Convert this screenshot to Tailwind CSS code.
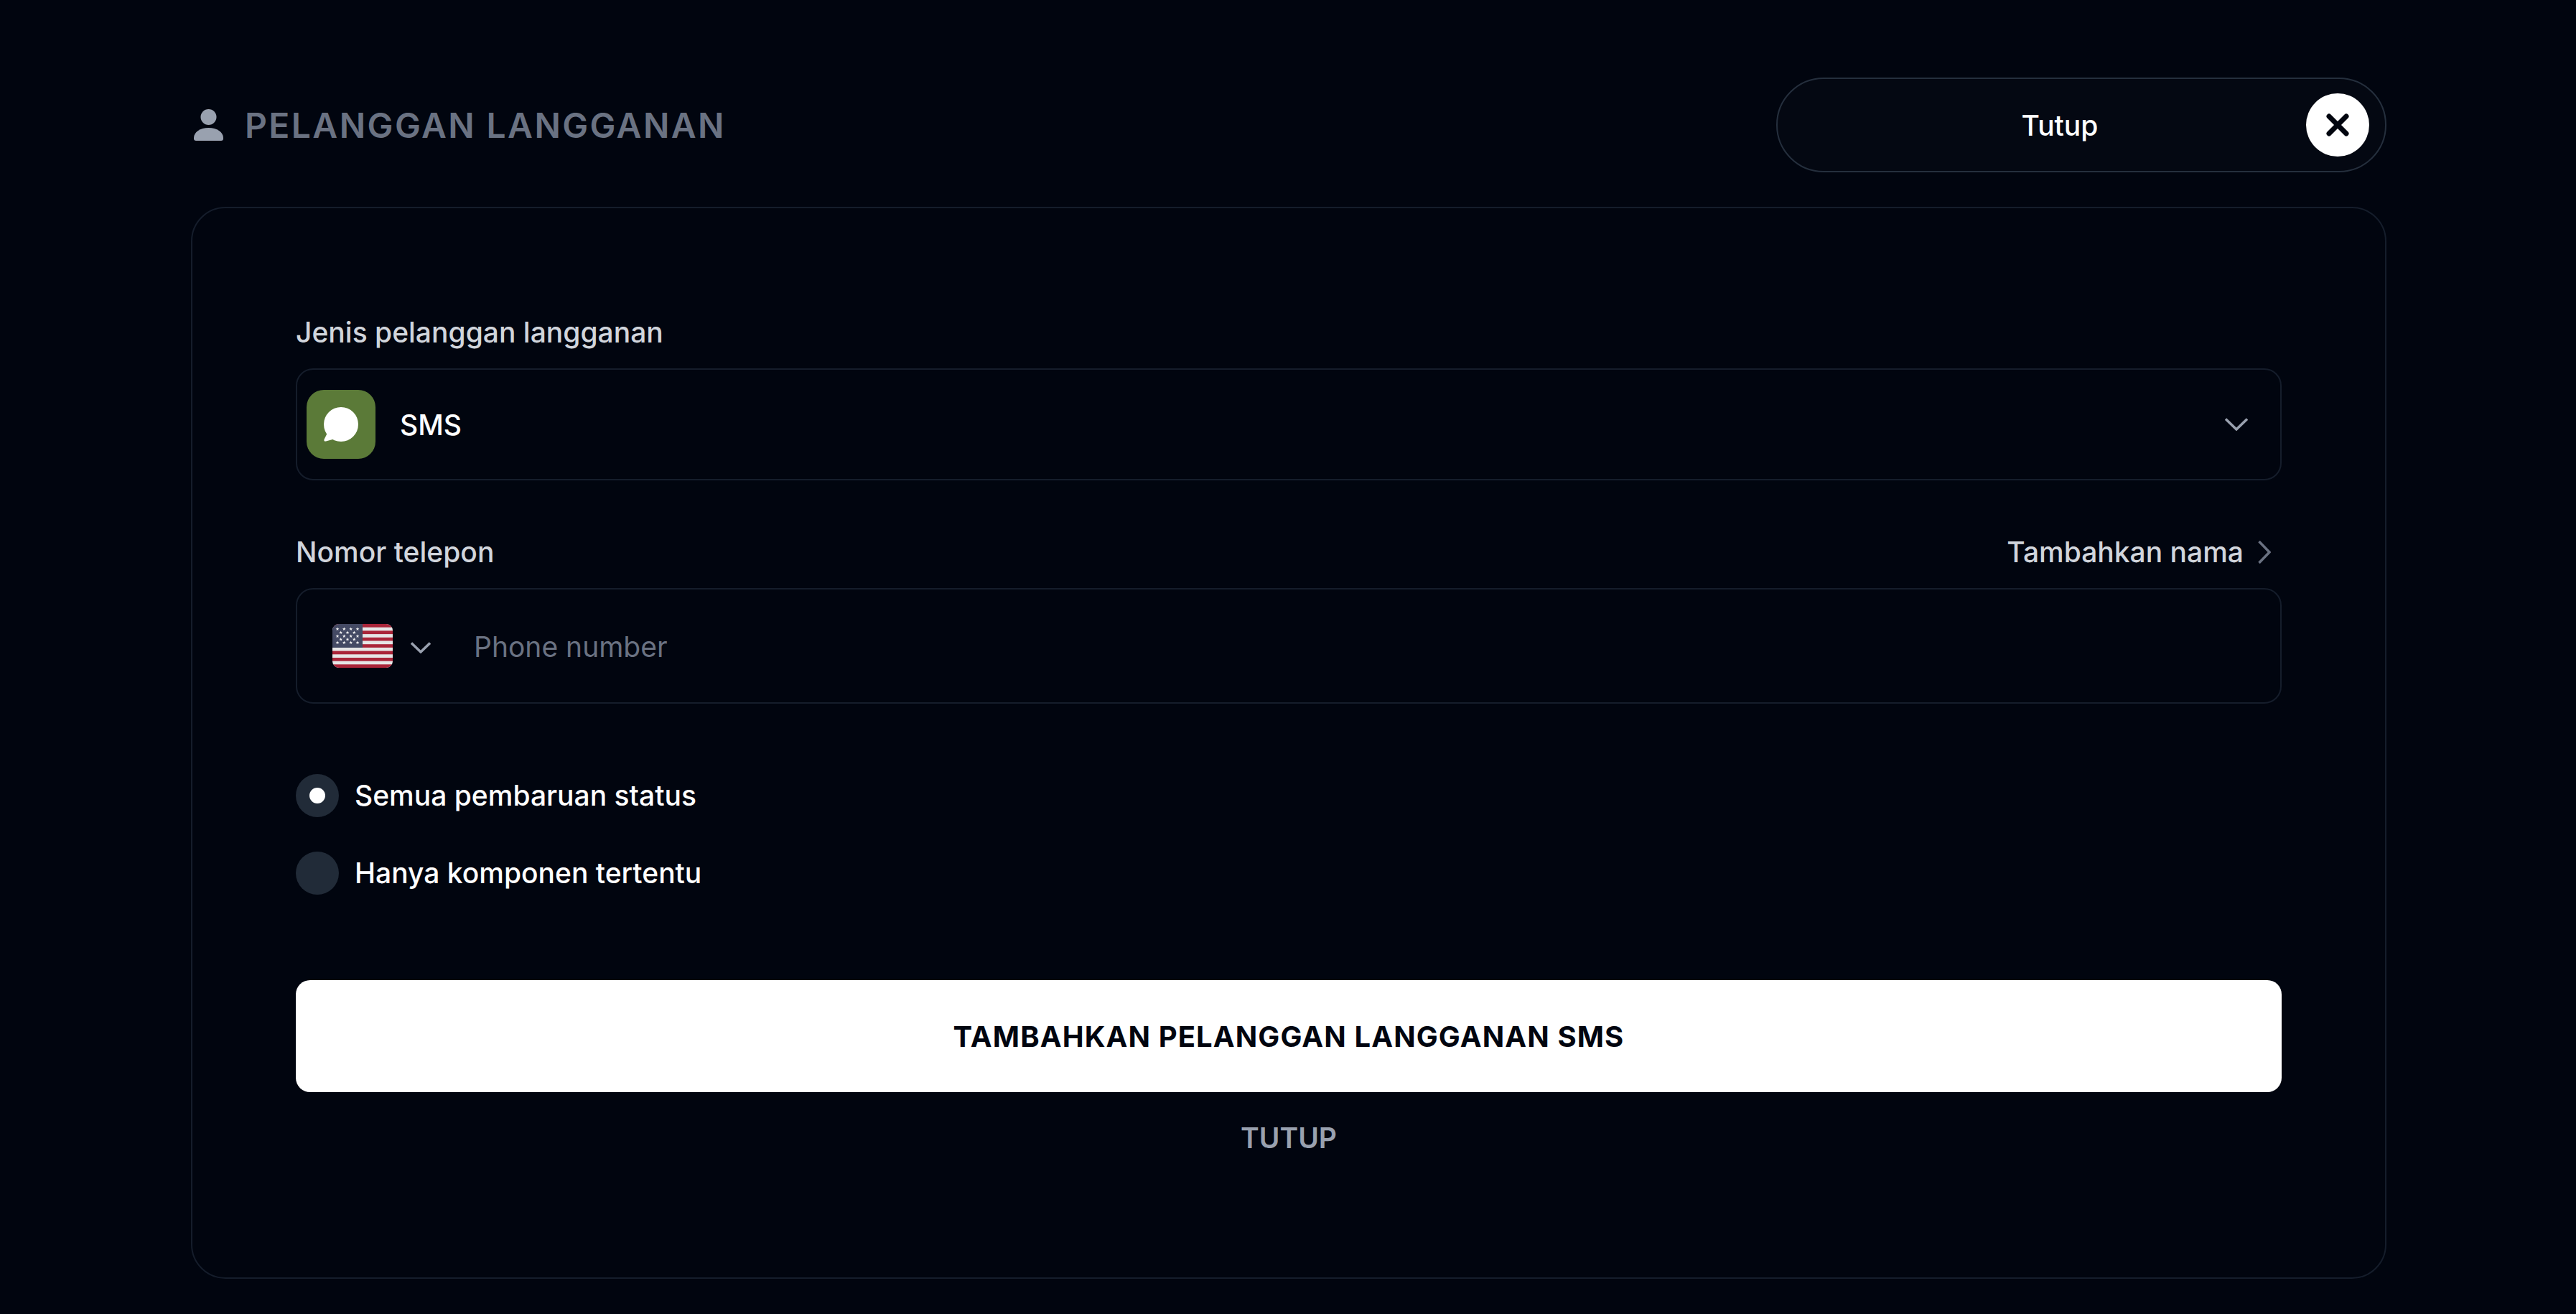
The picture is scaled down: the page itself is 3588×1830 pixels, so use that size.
<!DOCTYPE html>
<html lang="id">
<head>
    <meta charset="UTF-8">
    <meta name="viewport" content="width=device-width, initial-scale=1.0">
    <title>Pelanggan langganan</title>
    <script src="https://cdn.jsdelivr.net/npm/@tailwindcss/browser@4"></script>
</head>
<body class="bg-[#01050f] font-[Inter,sans-serif] w-[3588px] h-[1830px] overflow-hidden">
    <div class="pt-[108px] pl-[266px] pr-[264px]">

        <!-- Header -->
        <div class="flex items-center justify-between h-[132px] mb-[48px]">
            <div class="flex items-center gap-[30px] pl-[4px]">
                <svg class="w-[41px] h-[44px] text-gray-400" viewBox="0 0 41 44" fill="currentColor">
                    <ellipse cx="20.5" cy="11" rx="11" ry="11"/>
                    <path d="M0 40C0 32 9 26 20.5 26S41 32 41 40V41A3 3 0 0 1 38 44H3A3 3 0 0 1 0 41Z"/>
                </svg>
                <span class="pt-[2px] text-[48px] leading-[56px] font-semibold tracking-[2.4px] text-gray-500">PELANGGAN LANGGANAN</span>
            </div>
            <div class="flex items-center w-[850px] h-[132px] px-[22px] rounded-full border-2 border-[#252f3d] bg-white/[0.015]">
                <span class="flex-1 text-center pl-[28px] pt-[2px] text-[39px] leading-[52px] font-medium text-white">Tutup</span>
                <span class="flex items-center justify-center w-[88px] h-[88px] rounded-full bg-white">
                    <svg class="w-[40px] h-[40px]" viewBox="0 0 40 40" fill="none" stroke="#01050f" stroke-width="7" stroke-linecap="round">
                        <path d="M8 8L32 32M32 8L8 32"/>
                    </svg>
                </span>
            </div>
        </div>

        <!-- Card -->
        <div class="h-[1493px] pl-[144px] pr-[144px] pt-[145px] rounded-[48px] border-2 border-[#151d2b]">
            <label class="block text-[39px] leading-[56px] font-medium text-gray-300 mb-[22px]">Jenis pelanggan langganan</label>
            <div class="flex items-center h-[156px] pl-[13px] pr-[45px] rounded-[24px] border-2 border-[#151d2b]">
                <span class="flex items-center justify-center w-[96px] h-[96px] rounded-[24px] bg-[#5b7a38]">
                    <svg class="w-[96px] h-[96px]" viewBox="0 0 96 96" fill="#fff">
                        <circle cx="48" cy="48" r="24"/>
                        <path d="M30 58L24.5 69C24 71 25 72 27 71.500L40 68Z"/>
                    </svg>
                </span>
                <span class="flex-1 ml-[34px] pt-[2px] text-[39px] leading-[52px] font-medium text-white">SMS</span>
                <svg class="w-[32px] h-[18px] text-gray-400" viewBox="0 0 32 18" fill="none" stroke="currentColor" stroke-width="3.500">
                    <path d="M1 1.500L16 16L31 1.500"/>
                </svg>
            </div>

            <div class="flex items-center justify-between mt-[72px] mb-[22px] pr-[15px]">
                <label class="text-[39px] leading-[56px] font-medium text-gray-300">Nomor telepon</label>
                <div class="flex items-center gap-[20px]">
                    <span class="text-[39px] leading-[56px] font-medium text-gray-300">Tambahkan nama</span>
                    <svg class="w-[18px] h-[32px] text-gray-500" viewBox="0 0 18 32" fill="none" stroke="currentColor" stroke-width="3.500">
                        <path d="M1.500 1L16 16L1.500 31"/>
                    </svg>
                </div>
            </div>
            <div class="flex items-center h-[161px] pl-[49px] rounded-[24px] border-2 border-[#151d2b]">
                <svg class="w-[84px] h-[61px] rounded-[9px]" viewBox="0 0 84 61">
                    <defs>
                        <polygon id="star" points="0,-2.400 0.700,-0.700 2.400,-0.700 1.100,0.300 1.500,2.100 0,1 -1.500,2.100 -1.100,0.300 -2.400,-0.700 -0.700,-0.700"/>
                    </defs>
                    <rect width="84" height="61" fill="#e6e6e6"/>
                    <g fill="#aa2539">
                        <rect y="0" width="84" height="4.700"/>
                        <rect y="9.400" width="84" height="4.700"/>
                        <rect y="18.800" width="84" height="4.700"/>
                        <rect y="28.200" width="84" height="4.700"/>
                        <rect y="37.600" width="84" height="4.700"/>
                        <rect y="47" width="84" height="4.700"/>
                        <rect y="56.300" width="84" height="4.700"/>
                    </g>
                    <rect width="42" height="33" fill="#444a64"/>
                    <g fill="#f2f2f2">
                        <use href="#star" x="7" y="7"/><use href="#star" x="16.300" y="7"/><use href="#star" x="25.700" y="7"/><use href="#star" x="35" y="7"/>
                        <use href="#star" x="11.700" y="12"/><use href="#star" x="21" y="12"/><use href="#star" x="30.300" y="12"/>
                        <use href="#star" x="7" y="17"/><use href="#star" x="16.300" y="17"/><use href="#star" x="25.700" y="17"/><use href="#star" x="35" y="17"/>
                        <use href="#star" x="11.700" y="21.500"/><use href="#star" x="21" y="21.500"/><use href="#star" x="30.300" y="21.500"/>
                        <use href="#star" x="7" y="26"/><use href="#star" x="16.300" y="26"/><use href="#star" x="25.700" y="26"/><use href="#star" x="35" y="26"/>
                    </g>
                </svg>
                <svg class="w-[28px] h-[16px] ml-[25px] mt-[4px] text-gray-400" viewBox="0 0 28 16" fill="none" stroke="currentColor" stroke-width="3.500">
                    <path d="M1 1.500L14 14L27 1.500"/>
                </svg>
                <input type="text" placeholder="Phone number" class="flex-1 ml-[60px] pt-[2px] bg-transparent outline-none text-[39px] leading-[52px] text-white placeholder:text-gray-500">
            </div>

            <div class="mt-[98px] flex flex-col gap-[48px]">
                <label class="flex items-center gap-[22px]">
                    <span class="flex items-center justify-center w-[60px] h-[60px] rounded-full bg-[#212b38]">
                        <span class="w-[22px] h-[22px] rounded-full bg-white"></span>
                    </span>
                    <span class="text-[39px] leading-[56px] font-medium text-white">Semua pembaruan status</span>
                </label>
                <label class="flex items-center gap-[22px]">
                    <span class="w-[60px] h-[60px] rounded-full bg-[#212b38]"></span>
                    <span class="text-[39px] leading-[56px] font-medium text-white">Hanya komponen tertentu</span>
                </label>
            </div>

            <button class="block w-full h-[156px] mt-[119px] pt-[2px] rounded-[20px] bg-white text-[#01050f] text-[40px] font-bold tracking-[1.1px]">TAMBAHKAN PELANGGAN LANGGANAN SMS</button>
            <div class="mt-[36px] text-center text-[39px] leading-[56px] font-semibold text-gray-400">TUTUP</div>
        </div>
    </div>
</body>
</html>
